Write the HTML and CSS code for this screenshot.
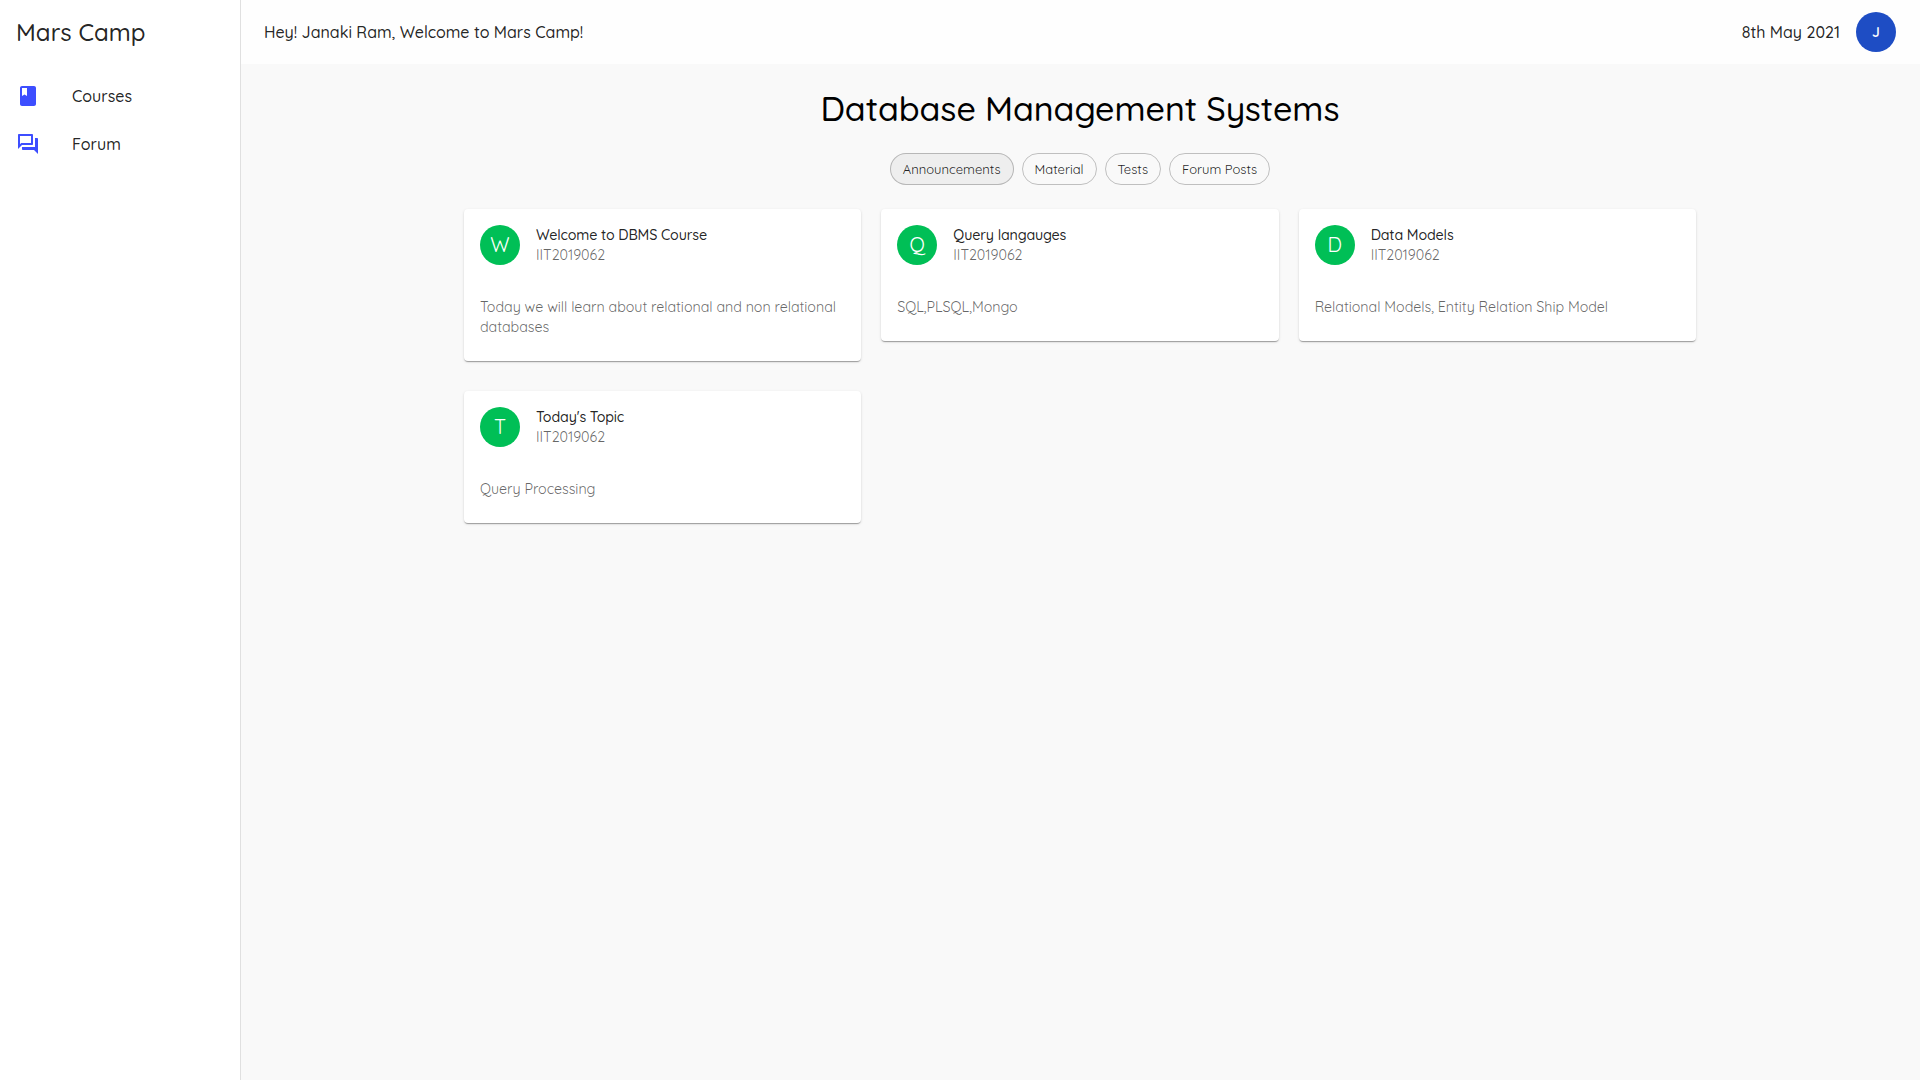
FILE: index.html
```
<!DOCTYPE html>
<html lang="en">
<head>
<meta charset="utf-8">
<title>Mars Camp</title>
<link rel="stylesheet" href="styles.css">
</head>
<body>
<div class="app">
  <aside class="drawer">
    <h5 class="brand">Mars Camp</h5>
    <nav class="nav">
      <a class="nav-item">
        <svg class="nav-icon" viewBox="0 0 24 24"><path d="M18 2H6c-1.100 0-2 .9-2 2v16c0 1.100.9 2 2 2h12c1.100 0 2-.9 2-2V4c0-1.100-.9-2-2-2zM6 4h5v8l-2.500-1.500L6 12V4z"/></svg>
        <span>Courses</span>
      </a>
      <a class="nav-item">
        <svg class="nav-icon" viewBox="0 0 24 24"><path d="M15 4v7H5.170L4 12.170V4h11m1-2H3c-.55 0-1 .45-1 1v14l4-4h10c.55 0 1-.45 1-1V3c0-.55-.45-1-1-1zm5 4h-2v9H6v2c0 .55.45 1 1 1h11l4 4V7c0-.55-.45-1-1-1z"/></svg>
        <span>Forum</span>
      </a>
    </nav>
  </aside>
  <div class="page">
    <header class="topbar">
      <p class="greeting">Hey! Janaki Ram, Welcome to Mars Camp!</p>
      <p class="date">8th May 2021</p>
      <div class="user">J</div>
    </header>
    <main class="content">
      <h1 class="title">Database Management Systems</h1>
      <div class="chips">
        <span class="chip active">Announcements</span>
        <span class="chip">Material</span>
        <span class="chip">Tests</span>
        <span class="chip">Forum Posts</span>
      </div>
      <section class="cards">
        <article class="card">
          <div class="card-head"><div class="avatar">W</div><div><p class="card-title">Welcome to DBMS Course</p><p class="muted">IIT2019062</p></div></div>
          <p class="card-body muted">Today we will learn about relational and non relational databases</p>
        </article>
        <article class="card">
          <div class="card-head"><div class="avatar">Q</div><div><p class="card-title">Query langauges</p><p class="muted">IIT2019062</p></div></div>
          <p class="card-body muted">SQL,PLSQL,Mongo</p>
        </article>
        <article class="card">
          <div class="card-head"><div class="avatar">D</div><div><p class="card-title">Data Models</p><p class="muted">IIT2019062</p></div></div>
          <p class="card-body muted">Relational Models, Entity Relation Ship Model</p>
        </article>
        <article class="card">
          <div class="card-head"><div class="avatar">T</div><div><p class="card-title">Today's Topic</p><p class="muted">IIT2019062</p></div></div>
          <p class="card-body muted">Query Processing</p>
        </article>
      </section>
    </main>
  </div>
</div>
</body>
</html>
```
FILE: styles.css
```
* { box-sizing: border-box; }
body, h1, h5, p { margin: 0; }
body {
  font-family: Quicksand, Lato, sans-serif;
  font-weight: 400;
  color: rgba(0, 0, 0, 0.87);
  background: #f9f9f9;
}
.app { display: flex; min-height: 100vh; }

.drawer {
  flex: none;
  width: 241px;
  background: #fff;
  border-right: 1px solid rgba(0, 0, 0, 0.12);
}
.brand {
  padding: 16px 16px 0;
  height: 64px;
  font-size: 24px;
  font-weight: 500;
  line-height: 32px;
  letter-spacing: 0.06px;
}
.nav { padding-top: 8px; }
.nav-item {
  display: flex;
  align-items: center;
  gap: 32px;
  height: 48px;
  padding: 0 16px;
  font-size: 16px;
  font-weight: 500;
  line-height: 24px;
}
.nav-icon { width: 24px; height: 24px; fill: #3d4eff; }

.page { flex: 1; min-width: 0; }
.topbar {
  display: flex;
  align-items: center;
  height: 64px;
  padding: 0 24px 0 23px;
  background: #fefefe;
  font-size: 16px;
  font-weight: 500;
  line-height: 24px;
}
.greeting { flex: 1; }
.user {
  display: flex;
  align-items: center;
  justify-content: center;
  width: 40px;
  height: 40px;
  margin-left: 16px;
  border-radius: 50%;
  background: #1e4dc4;
  color: #fff;
  font-size: 14px;
  font-weight: 600;
}

.content { padding: 24px 24px 0 23px; }
.title {
  color: #000;
  font-size: 34px;
  font-weight: 500;
  line-height: 42px;
  letter-spacing: -0.075px;
  text-align: center;
}
.chips { display: flex; justify-content: center; gap: 8px; margin-top: 23px; }
.chip {
  height: 32px;
  padding: 0 12px;
  border: 1px solid rgba(0, 0, 0, 0.23);
  border-radius: 16px;
  font-size: 13px;
  line-height: 30px;
}
.chip.active { background: #eee; }

.cards {
  display: grid;
  grid-template-columns: repeat(3, 1fr);
  align-items: start;
  gap: 30px 20px;
  max-width: 1232px;
  margin: 24px auto 0;
}
.card {
  background: #fff;
  border-radius: 4px;
  box-shadow: 0 2px 1px -1px rgba(0, 0, 0, 0.2), 0 1px 1px 0 rgba(0, 0, 0, 0.14), 0 1px 3px 0 rgba(0, 0, 0, 0.12);
  font-size: 14.25px;
  line-height: 20px;
  letter-spacing: -0.03px;
}
.card-head { display: flex; align-items: center; gap: 16px; padding: 16px; }
.avatar {
  display: flex;
  align-items: center;
  justify-content: center;
  width: 40px;
  height: 40px;
  border-radius: 50%;
  background: #00bf56;
  color: #fff;
  font-size: 20px;
  letter-spacing: 0;
}
.card-title { font-weight: 500; letter-spacing: -0.14px; }
.card-body { padding: 16px 16px 24px; }
.muted { color: rgba(0, 0, 0, 0.6); }
```
